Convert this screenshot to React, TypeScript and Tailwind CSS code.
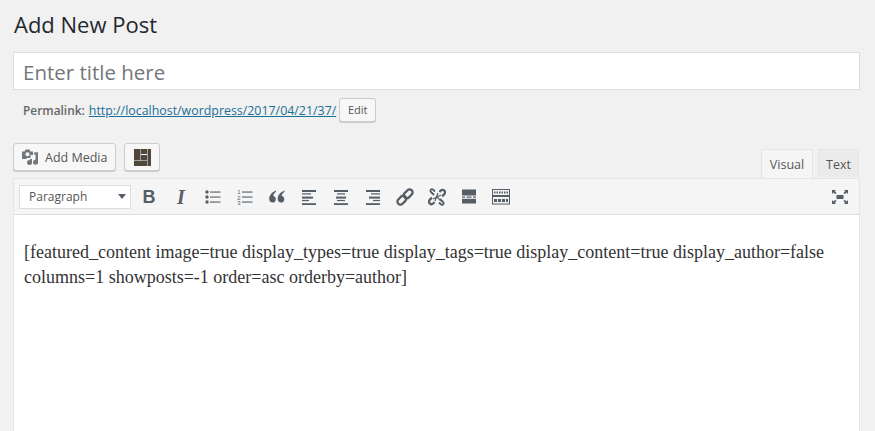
const stroke = '#555d66'

function Bullist() {
  return (
    <svg width="16" height="16" viewBox="0 0 16 16" fill={stroke}>
      <circle cx="2" cy="3" r="1.700" />
      <circle cx="2" cy="8" r="1.700" />
      <circle cx="2" cy="13" r="1.700" />
      <rect x="5" y="2.500" width="10.500" height="1.100" />
      <rect x="5" y="7.500" width="10.500" height="1.100" />
      <rect x="5" y="12.500" width="10.500" height="1.100" />
    </svg>
  )
}

function Numlist() {
  return (
    <svg width="16" height="16" viewBox="0 0 16 16" fill={stroke}>
      <text x="0.300" y="5" fontSize="6" fontFamily="Liberation Sans, sans-serif">1</text>
      <text x="0.300" y="10.500" fontSize="6" fontFamily="Liberation Sans, sans-serif">2</text>
      <text x="0.300" y="16" fontSize="6" fontFamily="Liberation Sans, sans-serif">3</text>
      <rect x="5" y="2.500" width="10.500" height="1.100" />
      <rect x="5" y="7.500" width="10.500" height="1.100" />
      <rect x="5" y="12.500" width="10.500" height="1.100" />
    </svg>
  )
}

function Quote() {
  const blob = 'M7 1.500C3 3 .2 6.200 .2 10c0 2.200 1.300 3.600 3.300 3.600s3.300-1.400 3.300-3.400c0-1.700-1.100-2.900-2.600-3.100 0-1.500 1.200-3.300 2.800-4.300z'
  return (
    <svg width="16" height="16" viewBox="0 0 16 16" fill={stroke}>
      <path d={blob} />
      <path d={blob} transform="translate(8.500 0)" />
    </svg>
  )
}

function Align({ rows }: { rows: [number, number][] }) {
  return (
    <svg width="16" height="16" viewBox="0 0 16 16" fill={stroke}>
      {rows.map(([x, w], i) => (
        <rect key={i} x={x} y={1 + i * 3.300} width={w} height={i % 2 === 0 ? 2 : 1.200} />
      ))}
    </svg>
  )
}

function LinkIcon() {
  return (
    <svg width="18" height="18" viewBox="0 0 18 18" fill="none" stroke={stroke} strokeWidth="2.300">
      <g transform="rotate(-45 9 9)">
        <rect x="-0.500" y="6" width="10" height="6" rx="3" />
        <rect x="8.500" y="6" width="10" height="6" rx="3" />
      </g>
    </svg>
  )
}

function UnlinkIcon() {
  return (
    <svg width="18" height="18" viewBox="0 0 18 18" fill="none" stroke={stroke} strokeWidth="2.200">
      <path d="M6.500 14l-1 1.200c-1.200 1.200-2.800 1.200-3.800.2s-1-2.600.2-3.800l2-2" />
      <path d="M11.500 4l1-1.200c1.200-1.200 2.800-1.200 3.800-.2s1 2.600-.2 3.800l-2 2" />
      <path d="M6 7L3 4c-1-1-.6-2 0-2.500S4.500 1 5.500 2l1.500 1.500" strokeWidth="1.800" />
      <path d="M12 11l3 3c1 1 .6 2 0 2.500s-1.500.5-2.500-.5L11 14.500" strokeWidth="1.800" />
      <path d="M10 5l-3 8M13 7l-8 4M8 8l5 5" strokeWidth="1.200" />
    </svg>
  )
}

function MoreIcon() {
  return (
    <svg width="16" height="16" viewBox="0 0 16 16" fill={stroke}>
      <rect x="1" y="0.500" width="14" height="6" />
      <rect x="1" y="7.500" width="3" height="1.200" />
      <rect x="5.500" y="7.500" width="5" height="1.200" />
      <rect x="12" y="7.500" width="3" height="1.200" />
      <rect x="1" y="9.800" width="14" height="4.700" />
    </svg>
  )
}

function KitchenIcon() {
  return (
    <svg width="18" height="16" viewBox="0 0 18 16" fill="none" stroke={stroke}>
      <rect x="0.500" y="0.500" width="17" height="6" />
      <rect x="0.500" y="7.500" width="17" height="7.500" />
      <path d="M2 3.500h14" strokeWidth="2" strokeDasharray="1.500 1" />
      <path d="M2 11.500h14" strokeWidth="3" strokeDasharray="3 1" />
    </svg>
  )
}

function FullscreenIcon() {
  return (
    <svg width="18" height="16" viewBox="0 0 18 16" fill={stroke}>
      <rect x="5.500" y="6" width="7" height="4" />
      <path d="M1 1h4L3.800 2.200 5.500 4 4.300 5.200 2.500 3.500 1 5z" />
      <path d="M17 1h-4l1.200 1.200L12.500 4l1.200 1.200 1.800-1.700L17 5z" />
      <path d="M1 15h4l-1.200-1.200L5.500 12l-1.200-1.200-1.800 1.700L1 11z" />
      <path d="M17 15h-4l1.200-1.200-1.700-1.800 1.200-1.200 1.800 1.700L17 11z" />
    </svg>
  )
}

function MediaIcon() {
  return (
    <svg width="16" height="16" viewBox="0 0 16 16" fill="#72777c">
      <path d="M0 2.500h2.500L3.500 .5h4l1 2h2.500v3.500H8.500v3H4.500V10H0z" />
      <circle cx="5.500" cy="5.200" r="2" fill="#f7f7f7" />
      <rect x="12" y="3.500" width="4" height="2" />
      <rect x="13.500" y="3.500" width="2.500" height="9.500" />
      <circle cx="13.500" cy="13.300" r="2.500" />
      <circle cx="7.500" cy="13.500" r="2.500" />
      <rect x="8" y="10" width="2" height="3.500" />
    </svg>
  )
}

function BlocksIcon() {
  return (
    <svg width="17" height="17" viewBox="0 0 17 17" fill="#50463c">
      <rect x="0" y="0" width="6.500" height="11.500" />
      <rect x="7" y="0" width="6" height="5" />
      <rect x="13.500" y="0" width="3.500" height="17" />
      <rect x="7" y="6" width="6" height="5.500" />
      <rect x="0" y="12" width="13" height="5" />
    </svg>
  )
}

function ToolBtn({ children, className }: { children: React.ReactNode; className: string }) {
  return <span className={`flex items-center justify-center ${className}`}>{children}</span>
}

export default function App() {
  return (
    <div className="h-[431px] overflow-hidden bg-[#f1f1f1] pl-[13px] pr-[15px] font-['Open_Sans',sans-serif]">
      <h1 className="h-[52px] pt-[8px] pl-[1px] text-[22px] leading-[32px] text-[#23282d]">Add New Post</h1>

      <div className="flex h-[38px] items-center border border-[#ddd] bg-white pl-[9px] pt-[2px] text-[20.500px] text-[#72777c]">
        Enter title here
      </div>

      <div className="mt-[8px] flex h-[24px] items-center pl-[10px] text-[12.400px]">
        <strong className="pt-[2px] text-[11.900px] font-semibold text-[#666]">Permalink:</strong>
        <a className="ml-[4px] pt-[2px] text-[#1a6f97] underline">http://localhost/wordpress/2017/04/21/37/</a>
        <span className="ml-[3px] flex h-[24px] w-[37px] items-center justify-center rounded-[3px] border border-[#ccc] bg-[#f7f7f7] text-[11px] text-[#555] shadow-[0_1px_0_#ccc]">
          Edit
        </span>
      </div>

      <div className="mt-[21px] flex h-[35px] items-start justify-between">
        <div className="flex gap-[8px]">
          <span className="flex h-[28px] w-[103px] items-center rounded-[3px] border border-[#ccc] bg-[#f7f7f7] pl-[8px] text-[12.500px] text-[#555] shadow-[0_1px_0_#ccc]">
            <MediaIcon />
            <span className="ml-[7px] pt-[2px]">Add Media</span>
          </span>
          <span className="flex h-[28px] w-[36px] items-center justify-center rounded-[3px] border border-[#ccc] bg-[#f7f7f7] shadow-[0_1px_0_#ccc]">
            <BlocksIcon />
          </span>
        </div>
        <div className="mt-[6px] flex h-[29px] gap-[5px] text-[12.500px] text-[#555]">
          <span className="flex h-[29px] w-[52px] items-center justify-center border border-b-0 border-[#e5e5e5] bg-[#f5f5f5] pt-[3px]">
            Visual
          </span>
          <span className="mr-[1px] flex h-[28px] w-[41px] items-center justify-center border border-b-0 border-[#e5e5e5] bg-[#ebebeb] pt-[3px]">
            Text
          </span>
        </div>
      </div>

      <div className="h-[500px] border border-[#e5e5e5] bg-white">
        <div className="flex h-[36px] items-center border-b border-[#ddd] bg-[#f5f5f5] pl-[5px] pr-[10px]">
          <span className="flex h-[24px] w-[112px] items-center justify-between border border-[#ddd] bg-white pl-[9px] pr-[4px] text-[12px] text-[#555]">
            <span className="pt-[1px]">Paragraph</span>
            <span className="h-0 w-0 border-x-[4px] border-t-[5px] border-x-transparent border-t-[#555d66]" />
          </span>
          <ToolBtn className="ml-[10px] w-[16px]">
            <span className="font-['Liberation_Sans',sans-serif] text-[18px] font-bold leading-none text-[#555d66]">B</span>
          </ToolBtn>
          <ToolBtn className="ml-[16px] w-[16px]">
            <span className="font-['Liberation_Serif',serif] text-[20px] font-bold italic leading-none text-[#555d66]">I</span>
          </ToolBtn>
          <ToolBtn className="ml-[16px] w-[16px]"><Bullist /></ToolBtn>
          <ToolBtn className="ml-[16px] w-[16px]"><Numlist /></ToolBtn>
          <ToolBtn className="ml-[16px] w-[16px]"><Quote /></ToolBtn>
          <ToolBtn className="ml-[16px] w-[16px]">
            <Align rows={[[1, 14], [1, 9], [1, 11], [1, 7], [1, 14]]} />
          </ToolBtn>
          <ToolBtn className="ml-[16px] w-[16px]">
            <Align rows={[[1, 14], [4, 8], [3, 10], [4, 8], [1, 14]]} />
          </ToolBtn>
          <ToolBtn className="ml-[16px] w-[16px]">
            <Align rows={[[1, 14], [6, 9], [4, 11], [8, 7], [1, 14]]} />
          </ToolBtn>
          <ToolBtn className="ml-[15px] w-[18px]"><LinkIcon /></ToolBtn>
          <ToolBtn className="ml-[14px] w-[18px]"><UnlinkIcon /></ToolBtn>
          <ToolBtn className="ml-[15px] w-[16px]"><MoreIcon /></ToolBtn>
          <ToolBtn className="ml-[15px] w-[18px]"><KitchenIcon /></ToolBtn>
          <ToolBtn className="ml-auto w-[18px]"><FullscreenIcon /></ToolBtn>
        </div>
        <div className="px-[10px] pt-[25px] font-['Liberation_Serif',serif] text-[18px] leading-[25px] text-[#333]">
          [featured_content image=true display_types=true display_tags=true display_content=true display_author=false columns=1 showposts=-1 order=asc orderby=author]
        </div>
      </div>
    </div>
  )
}
